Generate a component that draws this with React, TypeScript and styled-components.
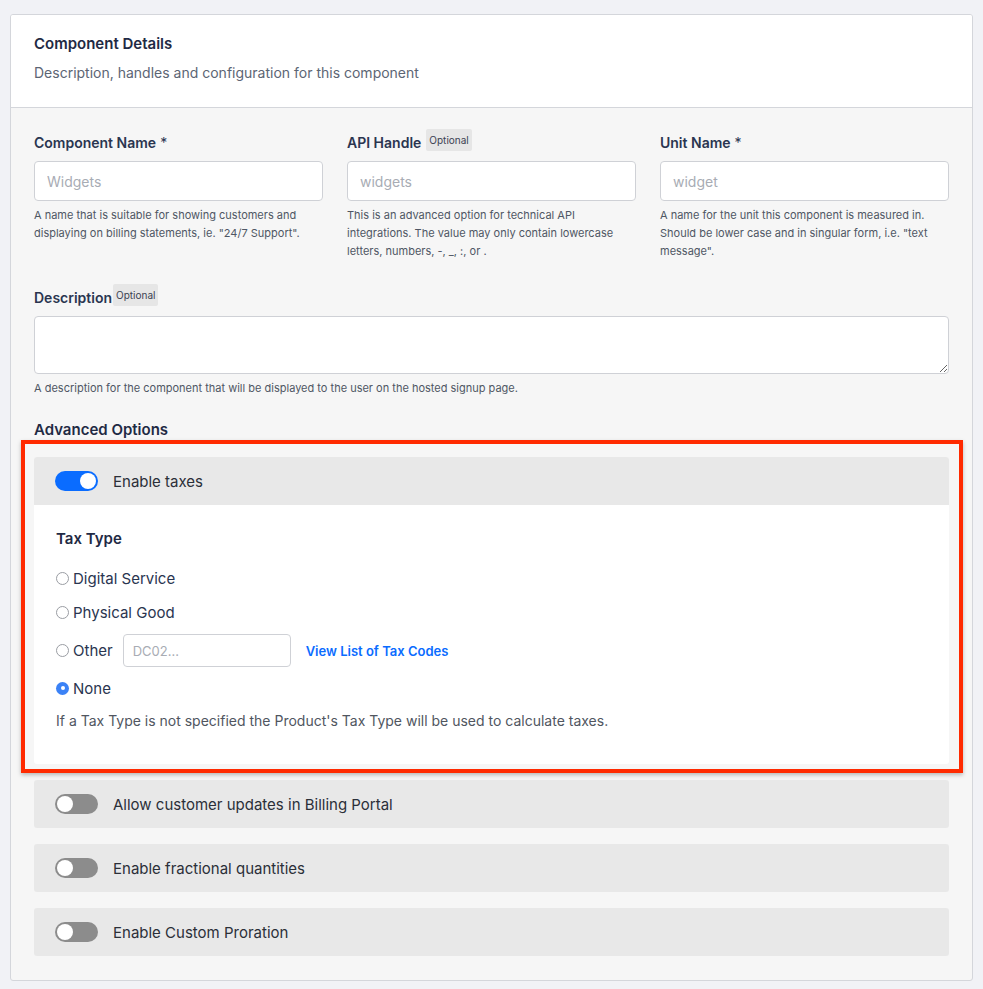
import React from "react";
import styled, { createGlobalStyle } from "styled-components";

const Global = createGlobalStyle`
  body {
    margin: 0;
    background: #f1f2f6;
    font-family: Inter, "Noto Sans", "Liberation Sans", sans-serif;
    color: #1f2a44;
  }
  * { box-sizing: border-box; }
`;

const Page = styled.div`
  padding: 14px 10px 9px 10px;
`;

const Card = styled.div`
  border: 1px solid #d4d6db;
  border-radius: 3px;
  background: #f6f6f6;
  overflow: hidden;
`;

const CardHeader = styled.div`
  background: #fff;
  border-bottom: 1px solid #d4d6db;
  padding: 19px 23px 22px;
  height: 93px;
`;

const Title = styled.h2`
  margin: 0;
  font-size: 15px;
  font-weight: 600;
  color: #1f2a44;
  line-height: 20px;
`;

const Subtitle = styled.p`
  margin: 9px 0 0;
  font-size: 14px;
  color: #5c6574;
  line-height: 20px;
`;

const CardBody = styled.div`
  padding: 24px 23px 24px;
`;

const FieldRow = styled.div`
  display: grid;
  grid-template-columns: repeat(3, 1fr);
  column-gap: 24px;
`;

const Field = styled.div`
  display: flex;
  flex-direction: column;
`;

const Label = styled.label`
  display: flex;
  align-items: center;
  height: 20px;
  font-size: 14px;
  font-weight: 600;
  color: #2a3550;
  margin-bottom: 9px;
`;

const Req = styled.span`
  font-weight: 400;
  margin-left: 4px;
`;

const Badge = styled.span<{ $gap?: number }>`
  margin-left: ${(p) => p.$gap ?? 5}px;
  background: #e6e6e6;
  border-radius: 2px;
  font-size: 10px;
  font-weight: 400;
  color: #3b4252;
  padding: 3px 3px;
  line-height: 16px;
  position: relative;
  top: -2px;
`;

const Input = styled.input<{ $w?: number }>`
  height: 40px;
  width: ${(p) => (p.$w ? `${p.$w}px` : "100%")};
  border: 1px solid #cfd1d6;
  border-radius: 4px;
  background: #fff;
  padding: 0 12px;
  font-family: inherit;
  font-size: 14px;
  color: #2a3550;
  &::placeholder {
    color: #a8acb4;
  }
`;

const TextArea = styled.textarea`
  height: 58px;
  width: 100%;
  border: 1px solid #cfd1d6;
  border-radius: 4px;
  background: #fff;
  font-family: inherit;
  display: block;
`;

const Help = styled.p`
  margin: 5px 0 0;
  font-size: 11px;
  line-height: 18px;
  color: #4f5664;
`;

const DescField = styled.div`
  margin-top: 27px;
`;

const SectionTitle = styled.h3`
  margin: 23px 0 17px;
  font-size: 15px;
  font-weight: 600;
  line-height: 20px;
  color: #1f2a44;
`;

const Options = styled.div`
  display: flex;
  flex-direction: column;
  gap: 16px;
`;

const Highlight = styled.div`
  position: relative;
`;

const Annotation = styled.div`
  position: absolute;
  left: -13px;
  right: -14px;
  top: -17px;
  bottom: -9px;
  border: 4px solid #ff2a00;
  box-shadow: 0 2px 4px rgba(0, 0, 0, 0.25);
  pointer-events: none;
`;

const Panel = styled.div`
  border-radius: 3px;
  overflow: hidden;
  background: #fff;
`;

const PanelHead = styled.div`
  display: flex;
  align-items: center;
  height: 48px;
  padding: 0 21px;
  background: #e8e8e8;
  gap: 15px;
  font-size: 15px;
  color: #2b2f38;
`;

const Toggle = styled.span<{ $on?: boolean }>`
  width: 43px;
  height: 20px;
  border-radius: 10px;
  background: ${(p) => (p.$on ? "#0a6cff" : "#8c8c8c")};
  position: relative;
  flex: none;
  &::after {
    content: "";
    position: absolute;
    top: 2px;
    ${(p) => (p.$on ? "right: 2px;" : "left: 2px;")}
    width: 16px;
    height: 16px;
    border-radius: 50%;
    background: #fff;
  }
`;

const PanelBody = styled.div`
  padding: 24px 22px 33px;
`;

const SubTitle = styled.h4`
  margin: 0 0 19px;
  font-size: 15px;
  font-weight: 600;
  line-height: 20px;
  color: #1f2a44;
`;

const RadioList = styled.div`
  display: flex;
  flex-direction: column;
  gap: 14px;
`;

const RadioRow = styled.label`
  display: flex;
  align-items: center;
  gap: 4px;
  font-size: 15px;
  color: #2a3550;
  min-height: 20px;
`;

const RadioDot = styled.span<{ $checked?: boolean }>`
  width: 13px;
  height: 13px;
  border-radius: 50%;
  flex: none;
  border: ${(p) => (p.$checked ? "none" : "1px solid #9a9da3")};
  background: ${(p) => (p.$checked ? "#3b82f6" : "#fff")};
  display: flex;
  align-items: center;
  justify-content: center;
  &::after {
    content: "";
    display: ${(p) => (p.$checked ? "block" : "none")};
    width: 4px;
    height: 4px;
    border-radius: 50%;
    background: #fff;
  }
`;

const OtherRow = styled(RadioRow)`
  margin: -2px 0 -3px;
`;

const OtherInput = styled(Input)`
  height: 33px;
  margin-left: 6px;
  padding: 0 9px;
  font-size: 13px;
`;

const Link = styled.a`
  margin-left: 11px;
  color: #0a6cff;
  font-size: 13px;
  font-weight: 600;
  text-decoration: none;
`;

const Note = styled.p`
  margin: 13px 0 0;
  font-size: 14px;
  color: #50565f;
  line-height: 20px;
`;

const fields = [
  {
    label: "Component Name",
    required: true,
    placeholder: "Widgets",
    help: 'A name that is suitable for showing customers and displaying on billing statements, ie. "24/7 Support".',
  },
  {
    label: "API Handle",
    optional: true,
    placeholder: "widgets",
    help: "This is an advanced option for technical API integrations. The value may only contain lowercase letters, numbers, -, _, :, or .",
  },
  {
    label: "Unit Name",
    required: true,
    placeholder: "widget",
    help: 'A name for the unit this component is measured in. Should be lower case and in singular form, i.e. "text message".',
  },
];

const otherOptions = [
  "Allow customer updates in Billing Portal",
  "Enable fractional quantities",
  "Enable Custom Proration",
];

export default function App() {
  return (
    <Page>
      <Global />
      <Card>
        <CardHeader>
          <Title>Component Details</Title>
          <Subtitle>Description, handles and configuration for this component</Subtitle>
        </CardHeader>
        <CardBody>
          <FieldRow>
            {fields.map((f) => (
              <Field key={f.label}>
                <Label>
                  {f.label}
                  {f.required && <Req>*</Req>}
                  {f.optional && <Badge>Optional</Badge>}
                </Label>
                <Input placeholder={f.placeholder} />
                <Help>{f.help}</Help>
              </Field>
            ))}
          </FieldRow>

          <DescField>
            <Label>
              Description<Badge $gap={1}>Optional</Badge>
            </Label>
            <TextArea />
            <Help>A description for the component that will be displayed to the user on the hosted signup page.</Help>
          </DescField>

          <SectionTitle>Advanced Options</SectionTitle>
          <Options>
            <Highlight>
              <Panel>
                <PanelHead>
                  <Toggle $on />
                  Enable taxes
                </PanelHead>
                <PanelBody>
                  <SubTitle>Tax Type</SubTitle>
                  <RadioList>
                    <RadioRow>
                      <RadioDot />
                      Digital Service
                    </RadioRow>
                    <RadioRow>
                      <RadioDot />
                      Physical Good
                    </RadioRow>
                    <OtherRow>
                      <RadioDot />
                      Other
                      <OtherInput $w={168} placeholder="DC02..." />
                      <Link href="#">View List of Tax Codes</Link>
                    </OtherRow>
                    <RadioRow>
                      <RadioDot $checked />
                      None
                    </RadioRow>
                  </RadioList>
                  <Note>If a Tax Type is not specified the Product's Tax Type will be used to calculate taxes.</Note>
                </PanelBody>
              </Panel>
              <Annotation />
            </Highlight>
            {otherOptions.map((o) => (
              <Panel key={o}>
                <PanelHead>
                  <Toggle />
                  {o}
                </PanelHead>
              </Panel>
            ))}
          </Options>
        </CardBody>
      </Card>
    </Page>
  );
}
